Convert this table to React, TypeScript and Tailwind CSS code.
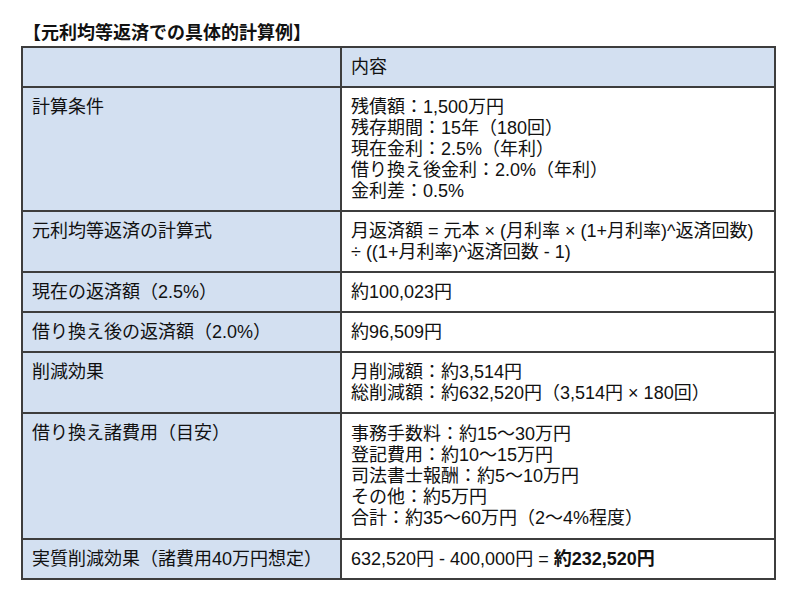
import React from "react";

const rows: { label: string; lines: React.ReactNode[] }[] = [
  {
    label: "計算条件",
    lines: [
      "残債額：1,500万円",
      "残存期間：15年（180回）",
      "現在金利：2.5%（年利）",
      "借り換え後金利：2.0%（年利）",
      "金利差：0.5%",
    ],
  },
  {
    label: "元利均等返済の計算式",
    lines: [
      "月返済額 = 元本 × (月利率 × (1+月利率)^返済回数)",
      "÷ ((1+月利率)^返済回数 - 1)",
    ],
  },
  { label: "現在の返済額（2.5%）", lines: ["約100,023円"] },
  { label: "借り換え後の返済額（2.0%）", lines: ["約96,509円"] },
  {
    label: "削減効果",
    lines: ["月削減額：約3,514円", "総削減額：約632,520円（3,514円 × 180回）"],
  },
  {
    label: "借り換え諸費用（目安）",
    lines: [
      "事務手数料：約15〜30万円",
      "登記費用：約10〜15万円",
      "司法書士報酬：約5〜10万円",
      "その他：約5万円",
      "合計：約35〜60万円（2〜4%程度）",
    ],
  },
  {
    label: "実質削減効果（諸費用40万円想定）",
    lines: [
      <>
        632,520円 - 400,000円 = <b className="font-bold">約232,520円</b>
      </>,
    ],
  },
];

export default function App() {
  return (
    <div
      className="min-h-[593px] w-[800px] bg-white pl-[21px] pt-[21px] text-[#111]"
      style={{ fontFamily: '"Liberation Sans", "Noto Sans CJK JP", sans-serif' }}
    >
      <div className="ml-[2px] h-[24px] text-[18px] font-bold leading-[24px]">
        【元利均等返済での具体的計算例】
      </div>
      <table className="mt-[1px] w-[755px] border-collapse border-2 border-[#3d3d3d] text-[18px] leading-[21px]">
        <colgroup>
          <col className="w-[319px]" />
          <col />
        </colgroup>
        <tbody>
          <tr>
            <td className="border-2 border-[#3d3d3d] bg-[#d3e0f1] px-[9px] pt-[9px] pb-[8px]"></td>
            <td className="border-2 border-[#3d3d3d] bg-[#d3e0f1] px-[9px] pt-[9px] pb-[8px]">
              内容
            </td>
          </tr>
          {rows.map((r, i) => (
            <tr key={i}>
              <td className="border-2 border-[#3d3d3d] bg-[#d3e0f1] px-[9px] pt-[9px] pb-[8px] align-top">
                {r.label}
              </td>
              <td
                className={
                  i === 5
                    ? "border-2 border-[#3d3d3d] bg-white px-[9px] pt-[10px] pb-[9px] align-top"
                    : "border-2 border-[#3d3d3d] bg-white px-[9px] pt-[9px] pb-[8px] align-top"
                }
              >
                {r.lines.map((l, j) => (
                  <div key={j}>{l}</div>
                ))}
              </td>
            </tr>
          ))}
        </tbody>
      </table>
    </div>
  );
}
